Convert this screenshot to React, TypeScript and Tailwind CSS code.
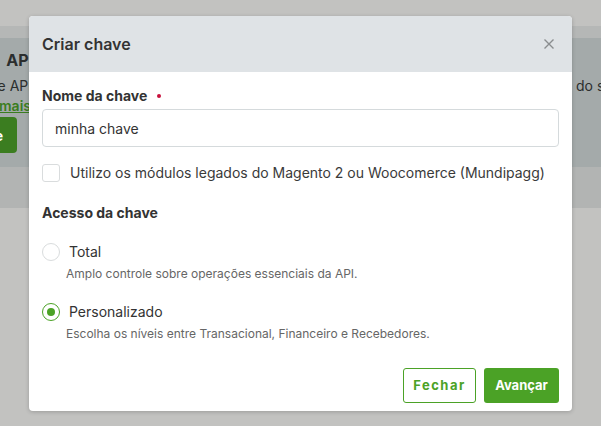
import { useState } from 'react';

const font = { fontFamily: 'Inter, "Noto Sans", sans-serif' };

function Radio({ checked }: { checked: boolean }) {
  return (
    <span
      className={
        checked
          ? 'flex h-[18px] w-[18px] shrink-0 items-center justify-center rounded-full border border-[#4ba226] bg-white'
          : 'flex h-[18px] w-[18px] shrink-0 items-center justify-center rounded-full border border-[#d9dcdd] bg-white'
      }
    >
      {checked && <span className="h-[8px] w-[8px] rounded-full bg-[#4ba226]" />}
    </span>
  );
}

function Option({
  label,
  desc,
  checked,
  onClick,
}: {
  label: string;
  desc: string;
  checked: boolean;
  onClick: () => void;
}) {
  return (
    <div className="cursor-pointer" onClick={onClick}>
      <div className="flex h-[20px] items-center gap-[9px]">
        <Radio checked={checked} />
        <span className="text-[14px] leading-[20px] text-[#333]">{label}</span>
      </div>
      <p className="ml-[24px] mt-[2px] text-[12px] leading-[20px] text-[#666]">{desc}</p>
    </div>
  );
}

export default function App() {
  const [access, setAccess] = useState<'total' | 'custom'>('custom');
  const [legacy, setLegacy] = useState(false);
  const [name, setName] = useState('minha chave');

  return (
    <div className="relative h-[426px] w-[601px] overflow-hidden bg-[#c2c2c0]" style={font}>
      {/* page behind the overlay */}
      <div className="h-[26px]" />
      <div className="h-[12px] bg-[#b5b7b6]" />
      <div className="flex h-[129px] justify-between bg-[#a4aaaa]">
        <div className="flex w-[29px] flex-col items-end overflow-hidden pt-[10px]">
          <h2 className="-mr-[4px] whitespace-nowrap text-[16px] font-bold leading-[24px] text-[#2b2e2e]">
            Chaves de&nbsp;&nbsp;API
          </h2>
          <p className="mt-[4px] -mr-[3px] whitespace-nowrap text-[14px] leading-[20px] text-[#2b2e2e]">
            Gerencie suas chaves de API
          </p>
          <a className="-mr-[2px] whitespace-nowrap text-[14px] font-semibold leading-[20px] text-[#3a7d20] underline">
            Saiba mais
          </a>
          <button className="mr-[12px] mt-[1px] h-[36px] whitespace-nowrap rounded-[4px] bg-[#3b7d20] px-[14px] text-[14px] font-bold text-white">
            Criar chave
          </button>
        </div>
        <div className="w-[25px] overflow-hidden pt-[38px]">
          <p className="whitespace-nowrap text-[14px] leading-[20px] text-[#2b2e2e]">do sistema</p>
        </div>
      </div>
      <div className="h-[41px] bg-[#b2b4b3]" />

      {/* modal */}
      <div className="absolute left-[29px] top-[16px] flex h-[395px] w-[543px] flex-col rounded-[4px] bg-white shadow-[0_1px_4px_rgba(0,0,0,0.2)]">
        <div className="flex h-[56px] items-center justify-between rounded-t-[4px] bg-[#dfe3e6] pl-[13px] pr-[18px]">
          <h1 className="text-[16px] font-semibold text-[#333]">Criar chave</h1>
          <button aria-label="Fechar">
            <svg width="10" height="10" viewBox="0 0 10 10" className="block">
              <path d="M0.5 0.5L9.5 9.5M9.5 0.5L0.5 9.5" stroke="#8a8d8f" strokeWidth="1.4" />
            </svg>
          </button>
        </div>

        <div className="flex flex-1 flex-col px-[13px] pt-[14px]">
          <label className="flex items-center text-[14px] font-bold leading-[20px] text-[#333]">
            Nome da chave
            <span className="ml-[10px] h-[4px] w-[4px] rounded-full bg-[#c8103c]" />
          </label>
          <input
            value={name}
            onChange={(e) => setName(e.target.value)}
            className="mt-[3px] h-[38px] w-full rounded-[4px] border border-[#d5dadc] px-[12px] text-[14px] text-[#333] outline-none"
          />

          <div className="mt-[16px] flex h-[20px] cursor-pointer items-center gap-[10px]" onClick={() => setLegacy(!legacy)}>
            <span className="flex h-[18px] w-[18px] shrink-0 items-center justify-center rounded-[3px] border border-[#d9dcdd] bg-white">
              {legacy && <span className="h-[8px] w-[8px] rounded-[1px] bg-[#4ba226]" />}
            </span>
            <span className="whitespace-nowrap text-[14px] leading-[20px] text-[#3a3a3a]">
              Utilizo os módulos legados do Magento 2 ou Woocomerce (Mundipagg)
            </span>
          </div>

          <h3 className="mt-[20px] text-[14px] font-bold leading-[20px] text-[#333]">Acesso da chave</h3>

          <div className="mt-[19px] flex flex-col gap-[18px]">
            <Option
              label="Total"
              desc="Amplo controle sobre operações essenciais da API."
              checked={access === 'total'}
              onClick={() => setAccess('total')}
            />
            <Option
              label="Personalizado"
              desc="Escolha os níveis entre Transacional, Financeiro e Recebedores."
              checked={access === 'custom'}
              onClick={() => setAccess('custom')}
            />
          </div>

          <div className="mt-auto mb-[8px] flex justify-end gap-[8px]">
            <button className="h-[35px] w-[73px] rounded-[3px] border border-[#4ba226] bg-white text-[13px] font-bold tracking-[1.5px] text-[#4ba226]">
              Fechar
            </button>
            <button className="h-[35px] w-[75px] rounded-[3px] bg-[#4ba226] text-[13px] font-bold text-white">
              Avançar
            </button>
          </div>
        </div>
      </div>
    </div>
  );
}
